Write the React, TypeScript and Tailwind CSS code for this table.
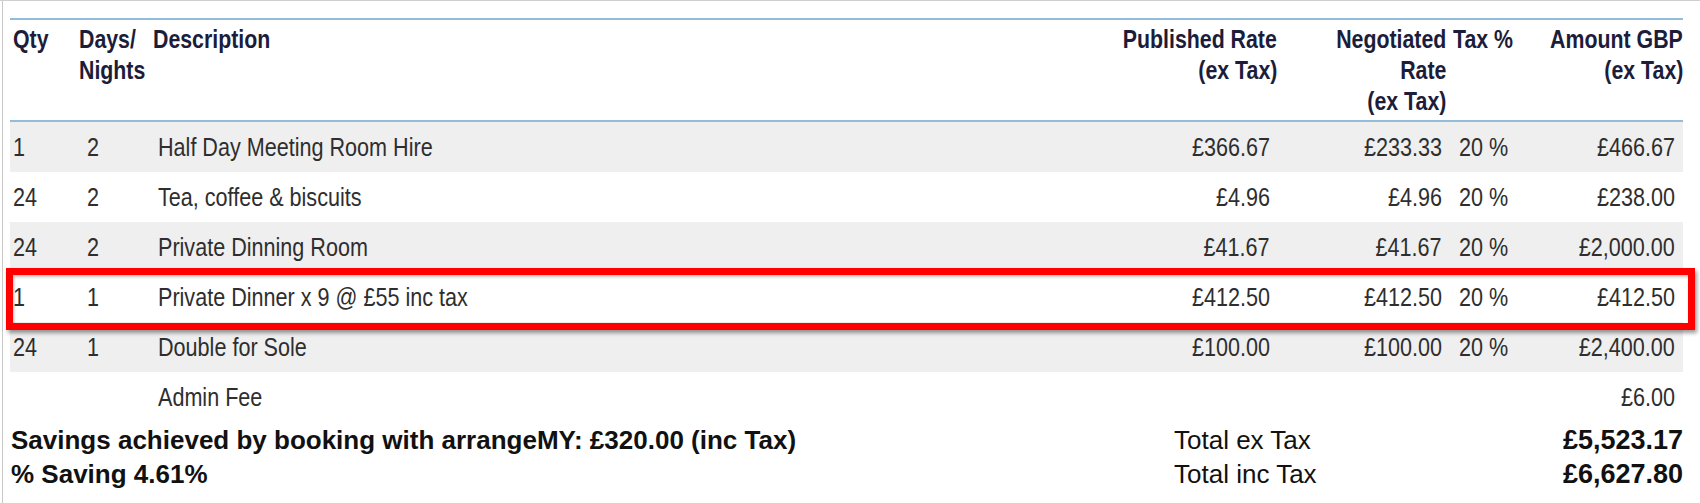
import type { ReactNode } from 'react'

const ROWS = [
  { qty: '1', days: '2', desc: 'Half Day Meeting Room Hire', pub: '£366.67', neg: '£233.33', tax: '20 %', amt: '£466.67' },
  { qty: '24', days: '2', desc: 'Tea, coffee & biscuits', pub: '£4.96', neg: '£4.96', tax: '20 %', amt: '£238.00' },
  { qty: '24', days: '2', desc: 'Private Dinning Room', pub: '£41.67', neg: '£41.67', tax: '20 %', amt: '£2,000.00' },
  { qty: '1', days: '1', desc: 'Private Dinner x 9 @ £55 inc tax', pub: '£412.50', neg: '£412.50', tax: '20 %', amt: '£412.50' },
  { qty: '24', days: '1', desc: 'Double for Sole', pub: '£100.00', neg: '£100.00', tax: '20 %', amt: '£2,400.00' },
  { qty: '', days: '', desc: 'Admin Fee', pub: '', neg: '', tax: '', amt: '£6.00' },
]

const COLS = 'grid grid-cols-[66px_74px_950px_185px_165px_70px_163px]'

// the original uses Arial Narrow; squeeze Liberation Sans to the same width
function N({ children, right, body }: { children: ReactNode; right?: boolean; body?: boolean }) {
  return (
    <div className={`flex ${right ? 'justify-end' : ''}`}>
      <span className={`whitespace-nowrap ${body ? 'scale-x-[0.83]' : 'scale-x-[0.82]'} ${right ? 'origin-right' : 'origin-left'}`}>
        {children}
      </span>
    </div>
  )
}

export default function App() {
  return (
    <div className="w-[1700px] h-[503px] bg-white border-t border-[#cfcfcf] pl-[2px] overflow-hidden font-['Liberation_Sans',Arial,sans-serif]">
      <div className="relative h-full border-l border-[#c8c8c8] pl-[7px] pt-[17px]">
        <div className="w-[1673px]">
          {/* header */}
          <div className={`${COLS} h-[104px] border-y-2 border-[#93bcdb] pt-[4px] text-[26px] leading-[31px] font-bold text-[#1c1d3a]`}>
            <div className="pl-[3px]"><N>Qty</N></div>
            <div className="pl-[3px]"><N>Days/</N><N>Nights</N></div>
            <div className="pl-[3px]"><N>Description</N></div>
            <div className="pr-[8px]"><N right>Published Rate</N><N right>(ex Tax)</N></div>
            <div className="pr-[4px]"><N right>Negotiated</N><N right>Rate</N><N right>(ex Tax)</N></div>
            <div className="pl-[3px]"><N>Tax %</N></div>
            <div><N right>Amount GBP</N><N right>(ex Tax)</N></div>
          </div>

          {/* rows */}
          {ROWS.map((r, i) => (
            <div
              key={i}
              className={`${COLS} h-[50px] items-center text-[26px] text-[#2e2e2e] ${i % 2 === 0 && i < 5 ? 'bg-[#efefef]' : 'bg-white'}`}
            >
              <div className="pl-[3px]"><N body>{r.qty}</N></div>
              <div className="pl-[11px]"><N body>{r.days}</N></div>
              <div className="pl-[8px]"><N body>{r.desc}</N></div>
              <div className="pr-[15px]"><N body right>{r.pub}</N></div>
              <div className="pr-[8px]"><N body right>{r.neg}</N></div>
              <div className="pl-[9px]"><N body>{r.tax}</N></div>
              <div className="pr-[8px]"><N body right>{r.amt}</N></div>
            </div>
          ))}

          {/* totals */}
          <div className="flex text-[26px] leading-[34px] text-[#111] pt-[1px]">
            <div className="flex-1 pl-[1px] font-bold">
              <div>Savings achieved by booking with arrangeMY: £320.00 (inc Tax)</div>
              <div>% Saving 4.61%</div>
            </div>
            <div className="w-[509px]">
              <div className="flex justify-between">
                <span>Total ex Tax</span>
                <span className="font-bold text-[27px]">£5,523.17</span>
              </div>
              <div className="flex justify-between">
                <span>Total inc Tax</span>
                <span className="font-bold text-[27px]">£6,627.80</span>
              </div>
            </div>
          </div>
        </div>

        {/* highlight around the private dinner row */}
        <div className="absolute left-[3px] top-[267px] w-[1689px] h-[62px] border-[7px] border-[#ff0000] shadow-[2px_3px_4px_rgba(0,0,0,0.4),inset_1px_2px_3px_rgba(0,0,0,0.25)]" />
      </div>
    </div>
  )
}
